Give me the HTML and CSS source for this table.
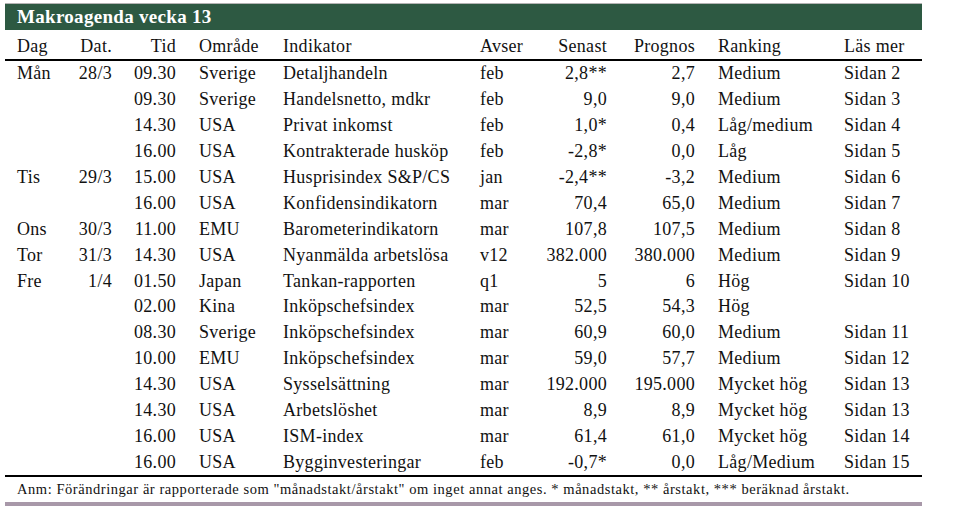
FILE: index.html
```html
<!DOCTYPE html>
<html lang="sv">
<head>
<meta charset="utf-8">
<title>Makroagenda vecka 13</title>
<link rel="stylesheet" href="styles.css">
</head>
<body>
<div class="frame">
  <div class="title">Makroagenda vecka 13</div>
  <div class="row head">
    <span>Dag</span><span class="r">Dat.</span><span class="r">Tid</span><span class="p">Område</span><span>Indikator</span><span>Avser</span><span class="r">Senast</span><span class="r">Prognos</span><span class="p">Ranking</span><span>Läs mer</span>
  </div>
  <div class="body">
    <div class="row"><span>Mån</span><span class="r">28/3</span><span class="r">09.30</span><span class="p">Sverige</span><span>Detaljhandeln</span><span>feb</span><span class="r">2,8**</span><span class="r">2,7</span><span class="p">Medium</span><span>Sidan 2</span></div>
    <div class="row"><span></span><span class="r"></span><span class="r">09.30</span><span class="p">Sverige</span><span>Handelsnetto, mdkr</span><span>feb</span><span class="r">9,0</span><span class="r">9,0</span><span class="p">Medium</span><span>Sidan 3</span></div>
    <div class="row"><span></span><span class="r"></span><span class="r">14.30</span><span class="p">USA</span><span>Privat inkomst</span><span>feb</span><span class="r">1,0*</span><span class="r">0,4</span><span class="p">Låg/medium</span><span>Sidan 4</span></div>
    <div class="row"><span></span><span class="r"></span><span class="r">16.00</span><span class="p">USA</span><span>Kontrakterade husköp</span><span>feb</span><span class="r">-2,8*</span><span class="r">0,0</span><span class="p">Låg</span><span>Sidan 5</span></div>
    <div class="row"><span>Tis</span><span class="r">29/3</span><span class="r">15.00</span><span class="p">USA</span><span>Husprisindex S&amp;P/CS</span><span>jan</span><span class="r">-2,4**</span><span class="r">-3,2</span><span class="p">Medium</span><span>Sidan 6</span></div>
    <div class="row"><span></span><span class="r"></span><span class="r">16.00</span><span class="p">USA</span><span>Konfidensindikatorn</span><span>mar</span><span class="r">70,4</span><span class="r">65,0</span><span class="p">Medium</span><span>Sidan 7</span></div>
    <div class="row"><span>Ons</span><span class="r">30/3</span><span class="r">11.00</span><span class="p">EMU</span><span>Barometerindikatorn</span><span>mar</span><span class="r">107,8</span><span class="r">107,5</span><span class="p">Medium</span><span>Sidan 8</span></div>
    <div class="row"><span>Tor</span><span class="r">31/3</span><span class="r">14.30</span><span class="p">USA</span><span>Nyanmälda arbetslösa</span><span>v12</span><span class="r">382.000</span><span class="r">380.000</span><span class="p">Medium</span><span>Sidan 9</span></div>
    <div class="row"><span>Fre</span><span class="r">1/4</span><span class="r">01.50</span><span class="p">Japan</span><span>Tankan-rapporten</span><span>q1</span><span class="r">5</span><span class="r">6</span><span class="p">Hög</span><span>Sidan 10</span></div>
    <div class="row"><span></span><span class="r"></span><span class="r">02.00</span><span class="p">Kina</span><span>Inköpschefsindex</span><span>mar</span><span class="r">52,5</span><span class="r">54,3</span><span class="p">Hög</span><span></span></div>
    <div class="row"><span></span><span class="r"></span><span class="r">08.30</span><span class="p">Sverige</span><span>Inköpschefsindex</span><span>mar</span><span class="r">60,9</span><span class="r">60,0</span><span class="p">Medium</span><span>Sidan 11</span></div>
    <div class="row"><span></span><span class="r"></span><span class="r">10.00</span><span class="p">EMU</span><span>Inköpschefsindex</span><span>mar</span><span class="r">59,0</span><span class="r">57,7</span><span class="p">Medium</span><span>Sidan 12</span></div>
    <div class="row"><span></span><span class="r"></span><span class="r">14.30</span><span class="p">USA</span><span>Sysselsättning</span><span>mar</span><span class="r">192.000</span><span class="r">195.000</span><span class="p">Mycket hög</span><span>Sidan 13</span></div>
    <div class="row"><span></span><span class="r"></span><span class="r">14.30</span><span class="p">USA</span><span>Arbetslöshet</span><span>mar</span><span class="r">8,9</span><span class="r">8,9</span><span class="p">Mycket hög</span><span>Sidan 13</span></div>
    <div class="row"><span></span><span class="r"></span><span class="r">16.00</span><span class="p">USA</span><span>ISM-index</span><span>mar</span><span class="r">61,4</span><span class="r">61,0</span><span class="p">Mycket hög</span><span>Sidan 14</span></div>
    <div class="row"><span></span><span class="r"></span><span class="r">16.00</span><span class="p">USA</span><span>Bygginvesteringar</span><span>feb</span><span class="r">-0,7*</span><span class="r">0,0</span><span class="p">Låg/Medium</span><span>Sidan 15</span></div>
  </div>
  <div class="note">Anm: Förändringar är rapporterade som "månadstakt/årstakt" om inget annat anges. * månadstakt, ** årstakt, *** beräknad årstakt.</div>
  <div class="bar"></div>
</div>
</body>
</html>
```
FILE: styles.css
```css
html, body {
  margin: 0;
  padding: 0;
  background: #ffffff;
}

body {
  font-family: "Liberation Serif", "Times New Roman", serif;
  color: #111;
}

.frame {
  width: 917px;
  margin: 3px 0 0 5px;
}

.title {
  height: 26px;
  border-top: 1px solid #b4b4b4;
  background: #2d5942;
  color: #ffffff;
  font-weight: bold;
  font-size: 19px;
  line-height: 26px;
  padding-left: 12px;
  letter-spacing: 0.3px;
}

.row {
  display: grid;
  grid-template-columns: 59px 48px 64px 107px 197px 60px 67px 88px 149px 1fr;
  align-items: center;
  font-size: 18px;
  letter-spacing: 0.3px;
  white-space: nowrap;
}

.row > span:first-child {
  padding-left: 12px;
}

.row .r {
  text-align: right;
}

.row .p {
  padding-left: 23px;
}

.head {
  height: 25px;
  padding-top: 4px;
  border-bottom: 2px solid #000;
}

.body .row {
  height: 25.9px;
}

.body {
  border-bottom: 2px solid #000;
}

.note {
  height: 24px;
  line-height: 24px;
  padding-left: 12px;
  font-size: 14.5px;
  letter-spacing: 0.55px;
  white-space: nowrap;
}

.bar {
  height: 8px;
  margin-top: 1px;
  background: #a898a9;
}
```
